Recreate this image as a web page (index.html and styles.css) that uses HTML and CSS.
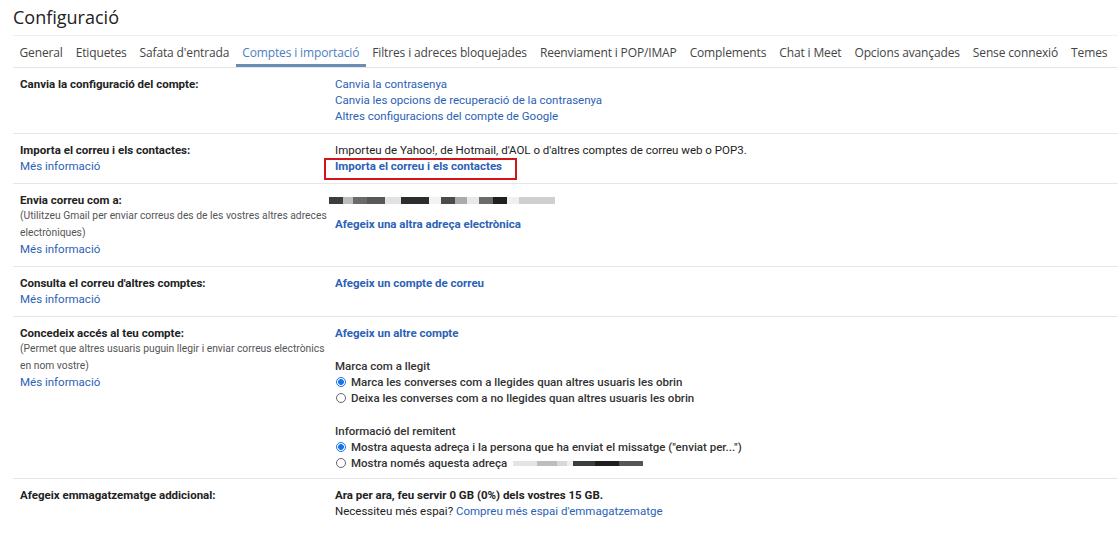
FILE: index.html
```html
<!DOCTYPE html>
<html lang="ca">
<head>
    <meta charset="UTF-8">
    <title>Configuració</title>
    <link rel="stylesheet" href="styles.css">
</head>
<body>
<div id="page">
    <h1 class="title">Configuració</h1>

    <nav class="tabs">
        <a class="tab">General</a>
        <a class="tab">Etiquetes</a>
        <a class="tab">Safata d'entrada</a>
        <a class="tab active">Comptes i importació</a>
        <a class="tab">Filtres i adreces bloquejades</a>
        <a class="tab">Reenviament i POP/IMAP</a>
        <a class="tab">Complements</a>
        <a class="tab">Chat i Meet</a>
        <a class="tab">Opcions avançades</a>
        <a class="tab">Sense connexió</a>
        <a class="tab">Temes</a>
    </nav>

    <div class="rows">
        <div class="row">
            <div class="label"><b>Canvia la configuració del compte:</b></div>
            <div class="value">
                <a class="link">Canvia la contrasenya</a>
                <a class="link">Canvia les opcions de recuperació de la contrasenya</a>
                <a class="link">Altres configuracions del compte de Google</a>
            </div>
        </div>

        <div class="row">
            <div class="label">
                <b>Importa el correu i els contactes:</b>
                <a class="link">Més informació</a>
            </div>
            <div class="value">
                <span>Importeu de Yahoo!, de Hotmail, d'AOL o d'altres comptes de correu web o POP3.</span>
                <span><a class="link strong marked">Importa el correu i els contactes</a></span>
            </div>
        </div>

        <div class="row">
            <div class="label">
                <b>Envia correu com a:</b>
                <span class="note">(Utilitzeu Gmail per enviar correus des de les vostres altres adreces electròniques)</span>
                <a class="link">Més informació</a>
            </div>
            <div class="value">
                <span class="line"><span class="redacted wide"></span></span>
                <a class="link strong spaced">Afegeix una altra adreça electrònica</a>
            </div>
        </div>

        <div class="row">
            <div class="label">
                <b>Consulta el correu d'altres comptes:</b>
                <a class="link">Més informació</a>
            </div>
            <div class="value">
                <a class="link strong">Afegeix un compte de correu</a>
            </div>
        </div>

        <div class="row tight">
            <div class="label">
                <b>Concedeix accés al teu compte:</b>
                <span class="note">(Permet que altres usuaris puguin llegir i enviar correus electrònics en nom vostre)</span>
                <a class="link">Més informació</a>
            </div>
            <div class="value">
                <a class="link strong">Afegeix un altre compte</a>

                <div class="group">
                    <span class="group-title">Marca com a llegit</span>
                    <label class="radio"><span class="dot on"></span>Marca les converses com a llegides quan altres usuaris les obrin</label>
                    <label class="radio"><span class="dot"></span>Deixa les converses com a no llegides quan altres usuaris les obrin</label>
                </div>

                <div class="group">
                    <span class="group-title">Informació del remitent</span>
                    <label class="radio"><span class="dot on"></span>Mostra aquesta adreça i la persona que ha enviat el missatge ("enviat per...")</label>
                    <label class="radio"><span class="dot"></span>Mostra només aquesta adreça <span class="redacted short"></span></label>
                </div>
            </div>
        </div>

        <div class="row last">
            <div class="label"><b>Afegeix emmagatzematge addicional:</b></div>
            <div class="value">
                <b>Ara per ara, feu servir 0 GB (0%) dels vostres 15 GB.</b>
                <span>Necessiteu més espai? <a class="link">Compreu més espai d'emmagatzematge</a></span>
            </div>
        </div>
    </div>
</div>
</body>
</html>
```

FILE: styles.css
```css
:root {
    --text-color: #222;
    --muted-color: #555;
    --link-color: #2b62b6;
    --line-color: #e6e6e6;
    --tab-active: #4a7ec2;
    --radio-color: #1a73e8;
}

body {
    margin: 0;
    background: #fff;
    color: var(--text-color);
    font-family: Roboto, 'Liberation Sans', sans-serif;
    font-size: 11.5px;
}

#page {
    padding-left: 13px;
}

.title {
    margin: 0;
    padding-top: 6px;
    height: 29px;
    font-family: 'Open Sans', sans-serif;
    font-size: 18px;
    font-weight: 400;
    line-height: 22px;
    color: #222;
}

.tabs {
    display: flex;
    border-top: 1px solid #efefef;
    border-bottom: 1px solid var(--line-color);
    height: 31px;
}

.tab {
    padding: 0 6.5px;
    font-family: 'Open Sans', sans-serif;
    font-size: 12px;
    line-height: 33px;
    color: #444;
    white-space: nowrap;
    letter-spacing: -0.14px;
}

.tab.active {
    color: var(--tab-active);
    box-shadow: inset 0 -3px 0 #6a8db5;
}

.row {
    display: flex;
    padding: 8px 0 9px 7px;
    border-bottom: 1px solid var(--line-color);
    line-height: 16px;
}

.row.tight {
    padding-bottom: 7px;
}

.row.last {
    border-bottom: none;
}

.label {
    width: 315px;
    flex-shrink: 0;
    display: flex;
    flex-direction: column;
}

.label b {
    font-weight: 700;
    color: #222;
}

.note {
    font-size: 10.3px;
    line-height: 16.5px;
    color: var(--muted-color);
    padding-right: 4px;
}

.value {
    display: flex;
    flex-direction: column;
    align-items: flex-start;
}

.link {
    color: var(--link-color);
    text-decoration: none;
    cursor: pointer;
}

.link.strong {
    font-weight: 700;
}

.link.spaced {
    margin-top: 8px;
}

.marked {
    position: relative;
}

/* red annotation box round the import link */
.marked::after {
    content: '';
    position: absolute;
    left: -11px;
    right: -15px;
    top: -1px;
    bottom: -7px;
    border: 2px solid #d0161c;
}

.line {
    display: flex;
    align-items: center;
    height: 16px;
}

.redacted {
    display: inline-block;
    height: 7px;
    vertical-align: middle;
}

.redacted.wide {
    width: 226px;
    margin-left: -6px;
    background: linear-gradient(90deg,
        #3d3d3d 0 14px, #bdbdbd 14px 24px, #6a6a6a 24px 38px, #585858 38px 56px,
        #e2e2e2 56px 72px, #2d2d2d 72px 100px, #f2f2f2 100px 112px, #4b4b4b 112px 126px,
        #aaaaaa 126px 138px, #e8e8e8 138px 150px, #6b6b6b 150px 164px, #1f1f1f 164px 178px,
        #f0f0f0 178px 190px, #cfcfcf 190px 226px);
}

.redacted.short {
    width: 130px;
    height: 5px;
    margin-left: 6px;
    background: linear-gradient(90deg,
        #e4e4e4 0 24px, #bdbdbd 24px 44px, #d8d8d8 44px 54px, #f0f0f0 54px 60px,
        #3d3d3d 60px 82px, #1e1e1e 82px 106px, #555 106px 130px);
}

.group {
    display: flex;
    flex-direction: column;
    margin-top: 17px;
}

.group-title {
    font-weight: 500;
    color: #333;
}

.radio {
    display: flex;
    align-items: center;
    font-weight: 500;
    color: #333;
}

.dot {
    width: 8px;
    height: 8px;
    border: 1px solid #666;
    border-radius: 50%;
    margin: 0 5px 0 1px;
    box-sizing: content-box;
}

.dot.on {
    border-color: var(--radio-color);
    background: radial-gradient(circle, var(--radio-color) 0 2.6px, #fff 3.2px);
}
```
